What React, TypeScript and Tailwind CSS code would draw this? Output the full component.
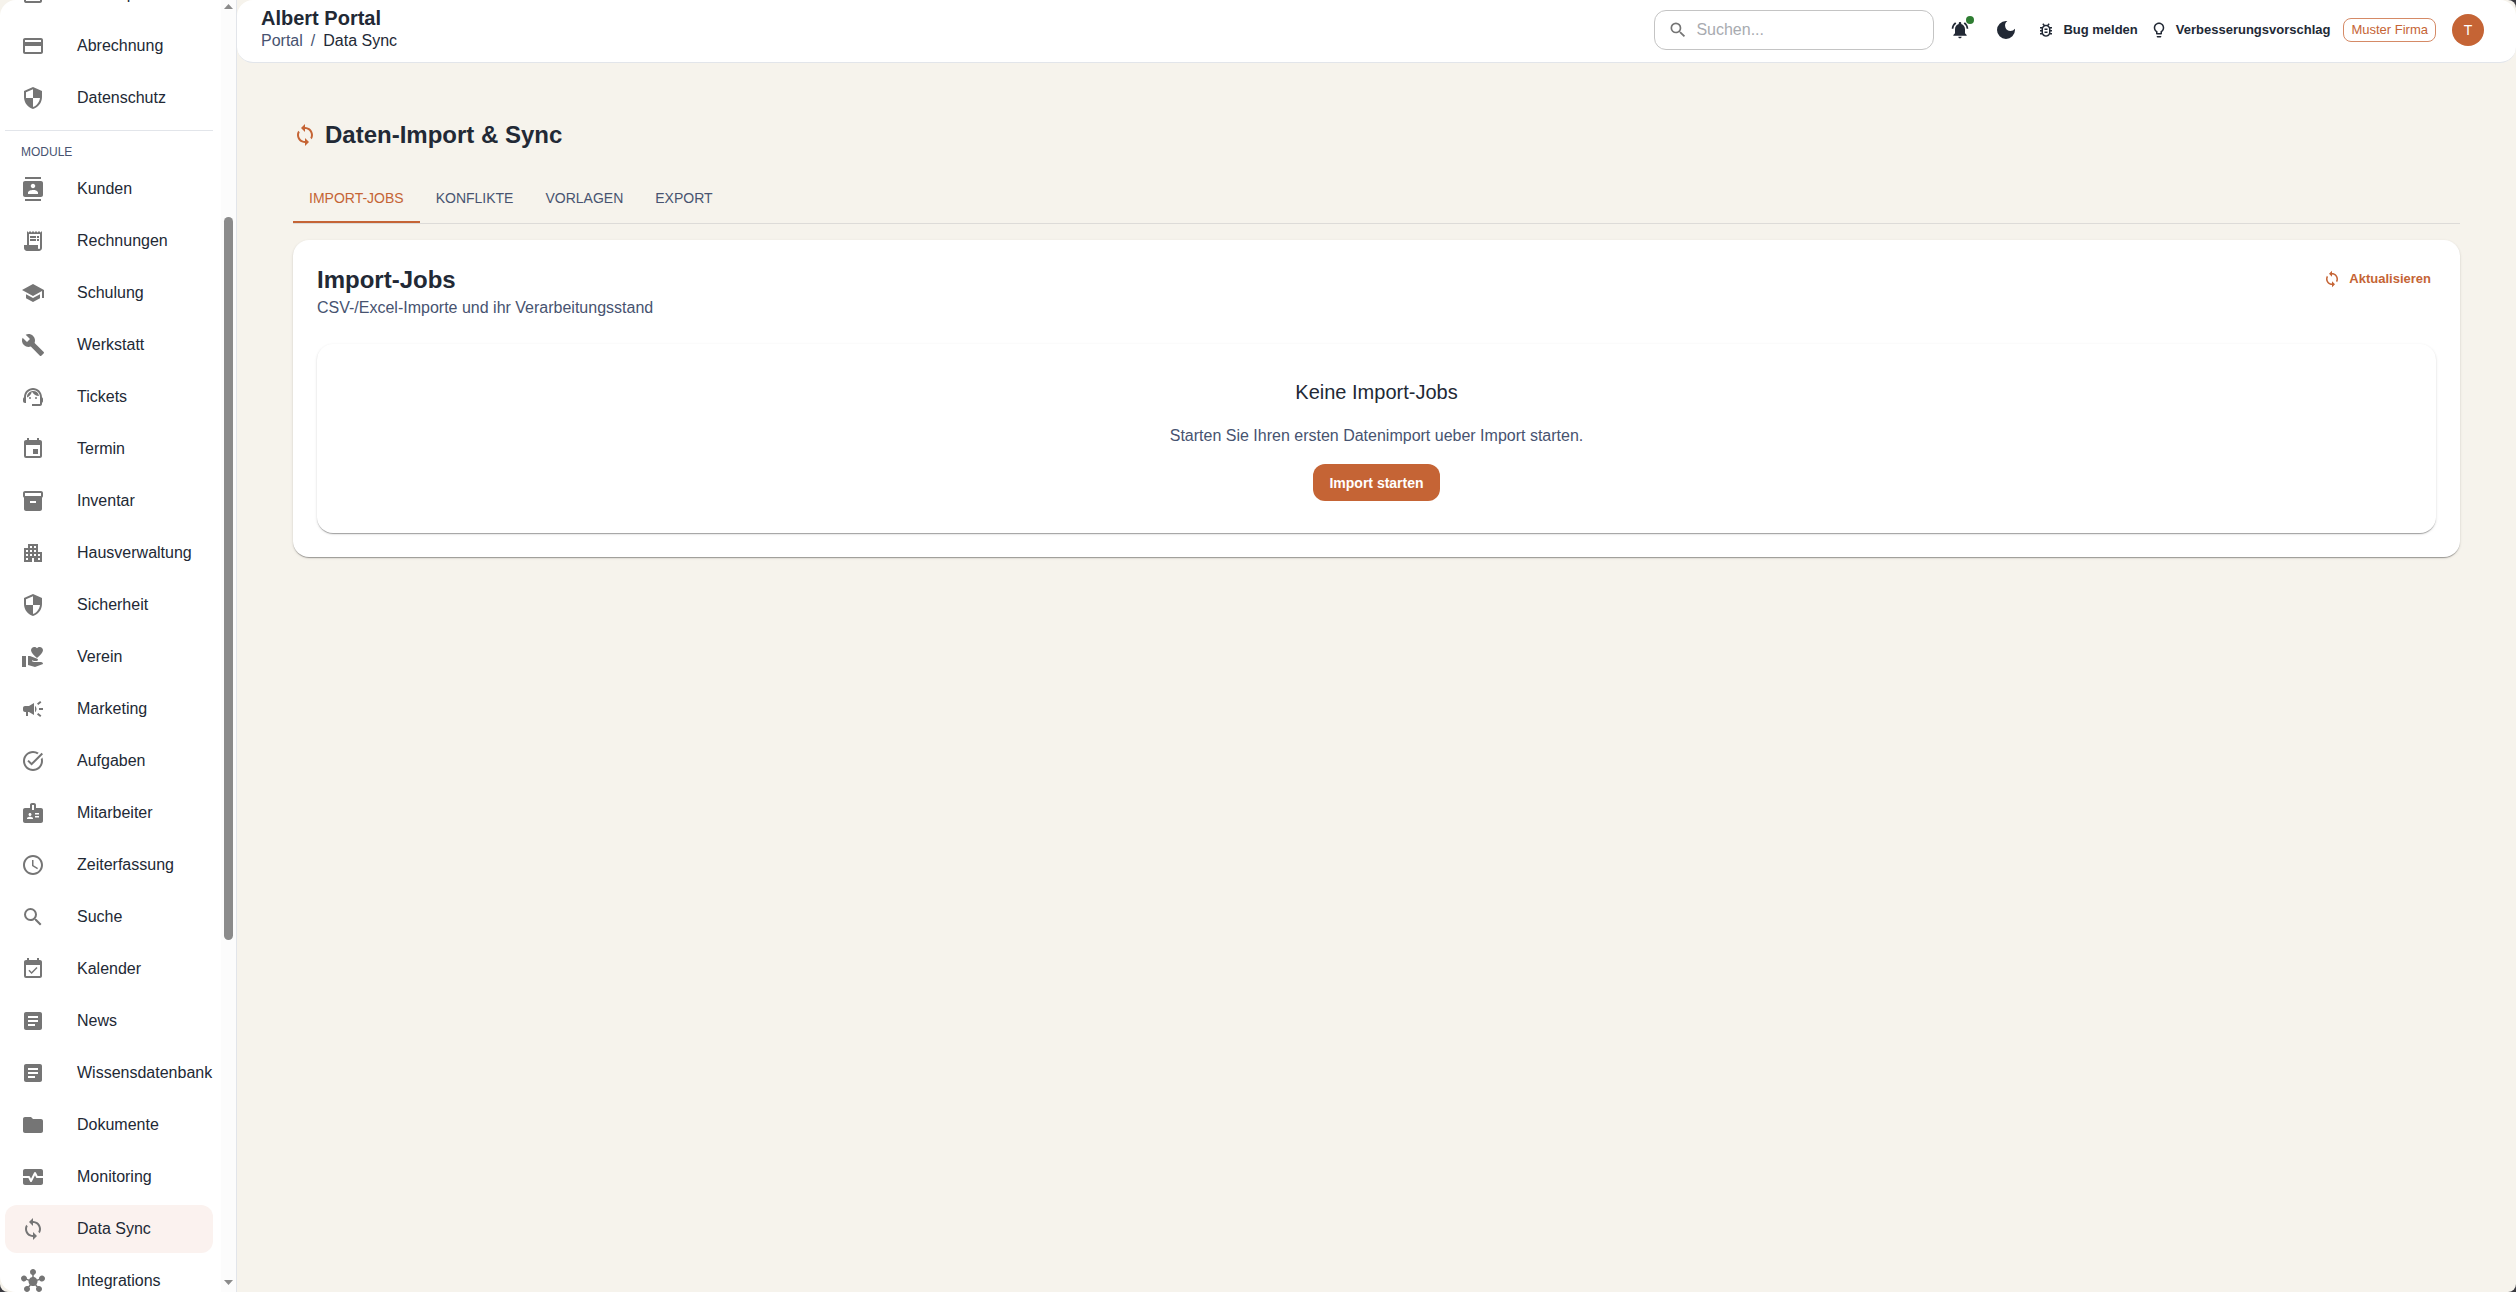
import React, { useState } from 'react';
import type { IconType } from 'react-icons';
import {
    MdApartment,
    MdArticle,
    MdBadge,
    MdBuild,
    MdCampaign,
    MdContacts,
    MdCreditCard,
    MdDarkMode,
    MdEvent,
    MdEventAvailable,
    MdFolder,
    MdHub,
    MdInventory2,
    MdLightbulbOutline,
    MdMonitorHeart,
    MdNotificationsActive,
    MdOutlineAssignment,
    MdOutlineBugReport,
    MdReceiptLong,
    MdSchedule,
    MdSchool,
    MdSearch,
    MdSecurity,
    MdSupportAgent,
    MdSync,
    MdTaskAlt,
    MdVolunteerActivism,
} from 'react-icons/md';

interface NavEntry {
    label: string;
    icon: IconType;
}

const accountItems: NavEntry[] = [
    { label: 'Arbeitsplatz', icon: MdOutlineAssignment },
    { label: 'Abrechnung', icon: MdCreditCard },
    { label: 'Datenschutz', icon: MdSecurity },
];

const moduleItems: NavEntry[] = [
    { label: 'Kunden', icon: MdContacts },
    { label: 'Rechnungen', icon: MdReceiptLong },
    { label: 'Schulung', icon: MdSchool },
    { label: 'Werkstatt', icon: MdBuild },
    { label: 'Tickets', icon: MdSupportAgent },
    { label: 'Termin', icon: MdEvent },
    { label: 'Inventar', icon: MdInventory2 },
    { label: 'Hausverwaltung', icon: MdApartment },
    { label: 'Sicherheit', icon: MdSecurity },
    { label: 'Verein', icon: MdVolunteerActivism },
    { label: 'Marketing', icon: MdCampaign },
    { label: 'Aufgaben', icon: MdTaskAlt },
    { label: 'Mitarbeiter', icon: MdBadge },
    { label: 'Zeiterfassung', icon: MdSchedule },
    { label: 'Suche', icon: MdSearch },
    { label: 'Kalender', icon: MdEventAvailable },
    { label: 'News', icon: MdArticle },
    { label: 'Wissensdatenbank', icon: MdArticle },
    { label: 'Dokumente', icon: MdFolder },
    { label: 'Monitoring', icon: MdMonitorHeart },
    { label: 'Data Sync', icon: MdSync },
    { label: 'Integrations', icon: MdHub },
];

const tabs = ['Import-Jobs', 'Konflikte', 'Vorlagen', 'Export'];

const cardShadow =
    'shadow-[0_2px_1px_-1px_rgba(0,0,0,0.2),0_1px_1px_0_rgba(0,0,0,0.14),0_1px_3px_0_rgba(0,0,0,0.12)]';

const NavItem: React.FC<{ item: NavEntry; active?: boolean }> = ({ item, active }) => {
    const Icon = item.icon;
    return (
        <a
            href="#"
            className={`flex h-12 shrink-0 items-center gap-8 rounded-xl pl-4 whitespace-nowrap ${active ? 'bg-[#fbf2ef]' : 'hover:bg-gray-50'}`}
        >
            <Icon size={24} className="shrink-0 text-[#757575]" />
            <span>{item.label}</span>
        </a>
    );
};

const Sidebar: React.FC = () => (
    <aside className="flex h-full shrink-0 overflow-hidden rounded-l-2xl border-r border-[#e2e5ea] bg-white">
        {/* list is scrolled down a little, so the first entry is mostly out of view */}
        <nav className="-mt-8 flex w-[221px] flex-col gap-1 pt-0.5 pr-2 pl-[5px]">
            {accountItems.map((item) => (
                <NavItem key={item.label} item={item} />
            ))}
            <hr className="mt-1 border-[#e2e5ea]" />
            <h2 className="pt-2 pl-4 text-xs leading-[18px] text-[#475370] uppercase">Module</h2>
            {moduleItems.map((item) => (
                <NavItem key={item.label} item={item} active={item.label === 'Data Sync'} />
            ))}
        </nav>
        <div className="flex w-[15px] flex-col items-center bg-[#fcfcfc] pt-1 pb-[7px]">
            <svg width="9" height="5" viewBox="0 0 9 5" fill="#8b8b8b">
                <path d="M0 5L4.5 0L9 5z" />
            </svg>
            <div className="flex-[208]" />
            <div className="w-[9px] flex-[723] rounded-full bg-[#8b8b8b]" />
            <div className="flex-[340]" />
            <svg width="9" height="5" viewBox="0 0 9 5" fill="#8b8b8b">
                <path d="M0 0L4.5 5L9 0z" />
            </svg>
        </div>
    </aside>
);

const Header: React.FC = () => (
    <header className="flex h-[63px] shrink-0 items-center justify-between rounded-2xl border-b border-[#e2e5ea] bg-white pr-8 pb-0.5 pl-6">
        <div className="pb-0.5">
            <h1 className="text-xl leading-6 font-bold">Albert Portal</h1>
            <nav className="flex gap-2 leading-[22px]">
                <a href="#" className="text-[#475370]">Portal</a>
                <span className="text-[#475370]">/</span>
                <span>Data Sync</span>
            </nav>
        </div>
        <div className="flex items-center">
            <label className="flex h-10 w-[280px] items-center gap-2 rounded-xl border border-[#c4c4c4] px-[13px]">
                <MdSearch size={20} className="shrink-0 text-[#757575]" />
                <input
                    type="text"
                    aria-label="Suchen"
                    placeholder="Suchen..."
                    className="w-full min-w-0 bg-transparent placeholder-[#a8abb0] outline-none"
                />
            </label>
            <button aria-label="Benachrichtigungen" className="relative ml-[11px] p-[5px]">
                <MdNotificationsActive size={20} />
                <span className="absolute top-px right-px size-2 rounded-full bg-[#2e7d32]" />
            </button>
            <button aria-label="Dunkelmodus" className="ml-4 p-[3px]">
                <MdDarkMode size={24} />
            </button>
            <button className="ml-4 flex items-center gap-2 text-[13px] font-bold">
                <MdOutlineBugReport size={18} />
                Bug melden
            </button>
            <button className="ml-3 flex items-center gap-2 text-[13px] font-bold">
                <MdLightbulbOutline size={18} />
                Verbesserungsvorschlag
            </button>
            <span className="ml-[13px] flex h-6 items-center rounded-lg border border-[#d58a66] px-[7px] text-[13px] text-[#c56435]">
                Muster Firma
            </span>
            <button className="ml-4 size-8 rounded-full bg-[#c56435] text-sm text-white">T</button>
        </div>
    </header>
);

const App: React.FC = () => {
    const [activeTab, setActiveTab] = useState('Import-Jobs');

    return (
        <div className="h-screen bg-[#3a3a40]">
            <div className="flex h-full overflow-hidden rounded-r-lg rounded-bl-lg bg-[#f6f3ec] font-['Liberation_Sans',Arial,sans-serif] text-base text-[#222935]">
                <Sidebar />
                <div className="flex min-w-0 flex-1 flex-col">
                    <Header />
                    <main className="flex flex-col px-14 pt-14">
                        <div className="flex items-center gap-2">
                            <MdSync size={24} className="text-[#c56435]" />
                            <h2 className="text-2xl leading-8 font-bold">Daten-Import &amp; Sync</h2>
                        </div>
                        <div role="tablist" className="mt-6 flex border-b border-[#dddbd8]">
                            {tabs.map((tab) => (
                                <button
                                    key={tab}
                                    role="tab"
                                    aria-selected={tab === activeTab}
                                    onClick={() => setActiveTab(tab)}
                                    className={`h-12 border-b-2 px-4 text-sm uppercase ${tab === activeTab ? 'border-[#c56435] text-[#c56435]' : 'border-transparent text-[#475370]'}`}
                                >
                                    {tab}
                                </button>
                            ))}
                        </div>
                        <section className={`mt-4 rounded-2xl bg-white p-6 ${cardShadow}`}>
                            <div className="flex items-start justify-between">
                                <div>
                                    <h3 className="text-2xl leading-8 font-bold">Import-Jobs</h3>
                                    <p className="leading-6 text-[#475370]">
                                        CSV-/Excel-Importe und ihr Verarbeitungsstand
                                    </p>
                                </div>
                                <button className="flex h-[30px] items-center gap-2 px-[5px] text-[13px] font-bold text-[#c56435]">
                                    <MdSync size={18} />
                                    Aktualisieren
                                </button>
                            </div>
                            <div className={`mt-6 flex flex-col items-center rounded-2xl bg-white p-8 ${cardShadow}`}>
                                <h4 className="text-xl leading-8">Keine Import-Jobs</h4>
                                <p className="mt-4 leading-6 text-[#475370]">
                                    Starten Sie Ihren ersten Datenimport ueber Import starten.
                                </p>
                                <button className="mt-4 h-[37px] rounded-xl bg-[#c56435] px-4 text-sm font-bold text-white">
                                    Import starten
                                </button>
                            </div>
                        </section>
                    </main>
                </div>
            </div>
        </div>
    );
};

export default App;
